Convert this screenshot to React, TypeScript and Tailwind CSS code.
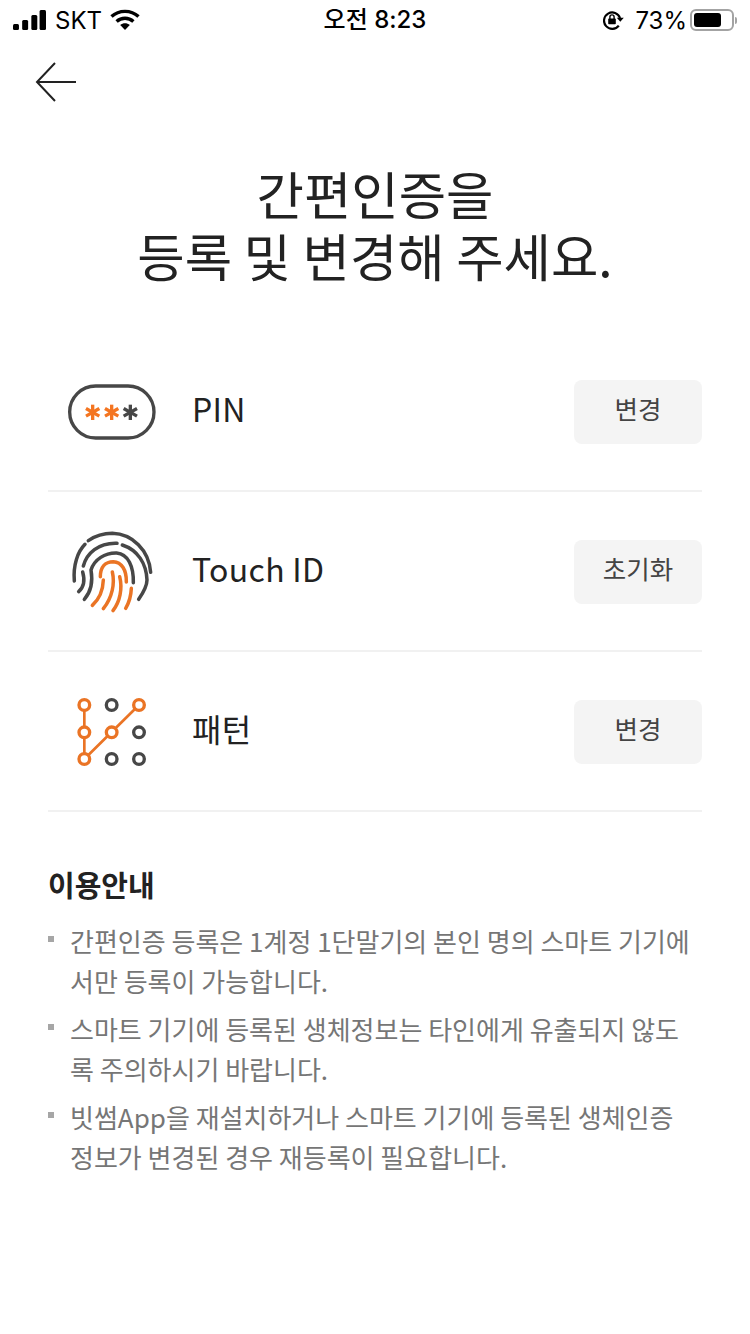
function Signal() {
  return (
    <svg width="33" height="20" viewBox="0 0 36 20" preserveAspectRatio="none" className="block">
      <rect x="0" y="14" width="6.5" height="6" rx="1.5" fill="#000" />
      <rect x="10" y="10" width="6.5" height="10" rx="1.5" fill="#000" />
      <rect x="20" y="5" width="6.5" height="15" rx="1.5" fill="#000" />
      <rect x="29" y="0" width="7" height="20" rx="1.5" fill="#000" />
    </svg>
  );
}

function Wifi() {
  return (
    <svg width="30" height="22" viewBox="0 0 30 22" className="block">
      <path d="M1.5 7.6C9 .6 21 .6 28.5 7.6" fill="none" stroke="#000" strokeWidth="3.4" />
      <path d="M6.6 12.5c4.8-4.3 12-4.3 16.8 0" fill="none" stroke="#000" strokeWidth="3.4" />
      <path d="M10.2 16 L15 21 L19.8 16 C17 13.6 13 13.6 10.2 16Z" fill="#000" />
    </svg>
  );
}

function RotationLock() {
  return (
    <svg width="22" height="20" viewBox="0 0 22 20" className="block">
      <path d="M15.8 15.6A8.2 8.2 0 1 1 17 8" fill="none" stroke="#000" strokeWidth="2.2" />
      <path d="M13.8 7.8h7l-3.5 4Z" fill="#000" />
      <rect x="5.2" y="8.6" width="7.6" height="5.6" rx="0.8" fill="#000" />
      <path d="M6.9 9V7a2.1 2.1 0 0 1 4.2 0V9" fill="none" stroke="#000" strokeWidth="1.4" />
    </svg>
  );
}

function Battery() {
  return (
    <div className="flex items-center">
      <div className="w-[44px] h-[22px] rounded-[6px] border-2 border-[#a3a3a3] p-[2px]">
        <div className="w-[27px] h-full rounded-[3px] bg-black" />
      </div>
      <div className="w-[2px] h-[7px] ml-[1px] rounded-r bg-[#a3a3a3]" />
    </div>
  );
}

function PinIcon() {
  const star = (cx: number, c: string) => (
    <g stroke={c} strokeWidth="10">
      <line x1={cx} y1="104" x2={cx} y2="150" />
      <line x1={cx - 20} y1="115.5" x2={cx + 20} y2="138.5" />
      <line x1={cx - 20} y1="138.5" x2={cx + 20} y2="115.5" />
    </g>
  );
  return (
    <svg width="130" height="80" viewBox="0 0 390 240" className="block ml-[2px]">
      <rect x="59" y="48" width="253" height="156" rx="78" fill="none" stroke="#474747" strokeWidth="10" />
      {star(128, "#f47521")}
      {star(185, "#f47521")}
      {star(241, "#474747")}
    </svg>
  );
}

function FingerprintIcon() {
  return (
    <svg width="110" height="100" viewBox="0 0 330 300" className="block ml-[7px]" fill="none" strokeLinecap="round" strokeWidth="10.5">
      <g stroke="#474747">
        <path d="M100 62C122 47 146 40 172 40C232 42 282 90 287 157" />
        <path d="M90 73C68 95 54 135 58 183" />
        <path d="M85 138C95 100 130 68 186 70" />
        <path d="M202 75C248 90 274 130 276 180C276 200 262 222 251 238" />
        <path d="M83 156C90 180 88 200 71 215" />
        <path d="M88 238C108 215 115 190 108 150C118 118 150 98 185 99C220 102 236 140 235 188" />
      </g>
      <g stroke="#ea7425">
        <path d="M136 170C136 142 150 125 175 125C200 126 215 150 214 186" />
        <path d="M145 180C144 210 132 238 112 256" />
        <path d="M172 156C180 190 172 232 145 266" />
        <path d="M194 170C203 205 195 245 174 272" />
        <path d="M229 205C228 228 222 248 212 265" />
      </g>
    </svg>
  );
}

function PatternIcon() {
  const xs = [73, 155, 237];
  const ys = [60, 142, 222];
  const orange = new Set(["0,0", "0,1", "0,2", "1,1", "2,0"]);
  return (
    <svg width="100" height="90" viewBox="0 0 300 270" className="block ml-[12px]">
      <path d="M73 60V222L237 60" fill="none" stroke="#ea7425" strokeWidth="8" />
      {xs.map((x, i) =>
        ys.map((y, j) => (
          <circle
            key={`${i}-${j}`}
            cx={x}
            cy={y}
            r="16"
            fill="#fff"
            stroke={orange.has(`${i},${j}`) ? "#ea7425" : "#474747"}
            strokeWidth="10"
          />
        )),
      )}
    </svg>
  );
}

function Row({ icon, label, action }: { icon: React.ReactNode; label: string; action: string }) {
  return (
    <div className="h-[160px] flex items-center border-b-2 border-[#f1f1f1]">
      <div className="w-[144px] flex items-center mb-[2px]">{icon}</div>
      <div className="flex-1 text-[32px] leading-[44px] tracking-[0.3px] text-[#222] mb-[6px]">{label}</div>
      <button className="w-[128px] h-[64px] mt-[2px] pb-[8px] rounded-[8px] bg-[#f4f4f4] text-[25.5px] text-[#444]">{action}</button>
    </div>
  );
}

function Note({ lines }: { lines: string[] }) {
  return (
    <div className="relative pl-[22px] mb-[8px]">
      <span className="absolute left-0 top-[15px] w-[6px] h-[6px] bg-[#a6a6a6]" />
      {lines.map((l) => (
        <div key={l} className="h-[40px] leading-[40px] whitespace-nowrap">{l}</div>
      ))}
    </div>
  );
}

export default function App() {
  return (
    <div
      className="w-[750px] h-[1334px] bg-white overflow-hidden"
      style={{ fontFamily: '"Noto Sans CJK KR", "Noto Sans", sans-serif' }}
    >
      <div
        className="h-[40px] px-[13px] grid grid-cols-3 items-center text-black text-[24px]"
        style={{ fontFamily: 'Inter, "Noto Sans CJK KR", sans-serif' }}
      >
        <div className="flex items-center">
          <Signal />
          <span className="ml-[9px] mt-[1px] text-[24px]">SKT</span>
          <span className="ml-[8px]"><Wifi /></span>
        </div>
        <div className="text-center font-medium text-[24px] whitespace-nowrap">오전 8:23</div>
        <div className="flex items-center justify-end">
          <RotationLock />
          <span className="ml-[10px] mt-[1px]">73%</span>
          <span className="ml-[3px]"><Battery /></span>
        </div>
      </div>

      <div className="pl-[35px] pt-[22px]">
        <svg width="42" height="40" viewBox="0 0 42 40" className="block">
          <path d="M20 1L2 20L20 39M2 20H41" fill="none" stroke="#222" strokeWidth="2" />
        </svg>
      </div>

      <h1 className="mt-[60px] text-center text-[51.5px] leading-[62px] font-normal text-[#222]">
        간편인증을
        <br />
        등록 및 변경해 주세요.
      </h1>

      <div className="mx-[48px] mt-[46px]">
        <Row icon={<PinIcon />} label="PIN" action="변경" />
        <Row icon={<FingerprintIcon />} label="Touch ID" action="초기화" />
        <Row icon={<PatternIcon />} label="패턴" action="변경" />

        <h2 className="mt-[49px] text-[29px] leading-[46px] font-bold text-[#222]">이용안내</h2>
        <div className="mt-[14px] text-[26px] text-[#767676]">
          <Note lines={["간편인증 등록은 1계정 1단말기의 본인 명의 스마트 기기에", "서만 등록이 가능합니다."]} />
          <Note lines={["스마트 기기에 등록된 생체정보는 타인에게 유출되지 않도", "록 주의하시기 바랍니다."]} />
          <Note lines={["빗썸App을 재설치하거나 스마트 기기에 등록된 생체인증", "정보가 변경된 경우 재등록이 필요합니다."]} />
        </div>
      </div>
    </div>
  );
}
